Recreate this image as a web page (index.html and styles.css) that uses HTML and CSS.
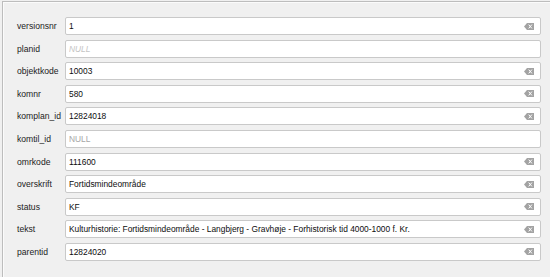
FILE: index.html
```html
<!DOCTYPE html>
<html lang="da">
<head>
<meta charset="UTF-8" />
<title>Attributes</title>
<link rel="stylesheet" href="styles.css">
</head>
<body>
  <div class="frame">
    <div class="form">
      <label>versionsnr</label>
      <div class="field"><input value="1"><span class="clear"><svg width="10" height="7" viewBox="0 0 10 7"><path d="M3 0H10V7H3L0 3.5Z" fill="#a3a3a3"/><path d="M4.7 1.6L7.9 5.4M7.9 1.6L4.7 5.4" stroke="#fff" stroke-width="1"/></svg></span></div>

      <label>planid</label>
      <div class="field"><input class="null italic" value="NULL"></div>

      <label>objektkode</label>
      <div class="field"><input value="10003"><span class="clear"><svg width="10" height="7" viewBox="0 0 10 7"><path d="M3 0H10V7H3L0 3.5Z" fill="#a3a3a3"/><path d="M4.7 1.6L7.9 5.4M7.9 1.6L4.7 5.4" stroke="#fff" stroke-width="1"/></svg></span></div>

      <label>komnr</label>
      <div class="field"><input value="580"><span class="clear"><svg width="10" height="7" viewBox="0 0 10 7"><path d="M3 0H10V7H3L0 3.5Z" fill="#a3a3a3"/><path d="M4.7 1.6L7.9 5.4M7.9 1.6L4.7 5.4" stroke="#fff" stroke-width="1"/></svg></span></div>

      <label>komplan_id</label>
      <div class="field"><input value="12824018"><span class="clear"><svg width="10" height="7" viewBox="0 0 10 7"><path d="M3 0H10V7H3L0 3.5Z" fill="#a3a3a3"/><path d="M4.7 1.6L7.9 5.4M7.9 1.6L4.7 5.4" stroke="#fff" stroke-width="1"/></svg></span></div>

      <label>komtil_id</label>
      <div class="field"><input class="null" value="NULL"></div>

      <label>omrkode</label>
      <div class="field"><input value="111600"><span class="clear"><svg width="10" height="7" viewBox="0 0 10 7"><path d="M3 0H10V7H3L0 3.5Z" fill="#a3a3a3"/><path d="M4.7 1.6L7.9 5.4M7.9 1.6L4.7 5.4" stroke="#fff" stroke-width="1"/></svg></span></div>

      <label>overskrift</label>
      <div class="field"><input value="Fortidsmindeområde"><span class="clear"><svg width="10" height="7" viewBox="0 0 10 7"><path d="M3 0H10V7H3L0 3.5Z" fill="#a3a3a3"/><path d="M4.7 1.6L7.9 5.4M7.9 1.6L4.7 5.4" stroke="#fff" stroke-width="1"/></svg></span></div>

      <label>status</label>
      <div class="field"><input value="KF"><span class="clear"><svg width="10" height="7" viewBox="0 0 10 7"><path d="M3 0H10V7H3L0 3.5Z" fill="#a3a3a3"/><path d="M4.7 1.6L7.9 5.4M7.9 1.6L4.7 5.4" stroke="#fff" stroke-width="1"/></svg></span></div>

      <label>tekst</label>
      <div class="field"><input value="Kulturhistorie: Fortidsmindeområde - Langbjerg - Gravhøje - Forhistorisk tid 4000-1000 f. Kr."><span class="clear"><svg width="10" height="7" viewBox="0 0 10 7"><path d="M3 0H10V7H3L0 3.5Z" fill="#a3a3a3"/><path d="M4.7 1.6L7.9 5.4M7.9 1.6L4.7 5.4" stroke="#fff" stroke-width="1"/></svg></span></div>

      <label>parentid</label>
      <div class="field"><input value="12824020"><span class="clear"><svg width="10" height="7" viewBox="0 0 10 7"><path d="M3 0H10V7H3L0 3.5Z" fill="#a3a3a3"/><path d="M4.7 1.6L7.9 5.4M7.9 1.6L4.7 5.4" stroke="#fff" stroke-width="1"/></svg></span></div>
    </div>
  </div>
</body>
</html>
```

FILE: styles.css
```css
html, body {
  margin: 0;
  height: 100%;
  background: #f0f0f0;
}

body {
  font-family: 'Liberation Sans', Arial, sans-serif;
  font-size: 8.6px;
  color: #1e1e1e;
  overflow: hidden;
}

.frame {
  margin: 1px 0 0 2px;
  height: 100%;
  border-top: 1px solid #bdbdbd;
  border-left: 1px solid #bdbdbd;
  box-shadow: inset 1px 1px 0 #fbfbfb;
  padding: 15px 9px 0 14px;
  box-sizing: border-box;
}

.form {
  display: grid;
  grid-template-columns: 44px 1fr;
  grid-auto-rows: 18px;
  column-gap: 4px;
  row-gap: 4.6px;
  align-items: center;
}

.form label {
  white-space: nowrap;
  color: #222;
}

.field {
  display: flex;
  align-items: center;
  height: 18px;
  box-sizing: border-box;
  background: #fff;
  border: 1px solid #c9c9c9;
  border-radius: 2px;
}

.field input {
  flex: 1;
  min-width: 0;
  border: none;
  outline: none;
  background: transparent;
  padding: 0 0 0 3px;
  margin: 0;
  font: inherit;
  font-size: 8.4px;
  color: #0d0d0d;
}

.field input.null { color: #a6a6a6; }
.field input.italic { font-style: italic; color: #c4c4c4; }

.clear {
  display: flex;
  margin-right: 6px;
}
```
